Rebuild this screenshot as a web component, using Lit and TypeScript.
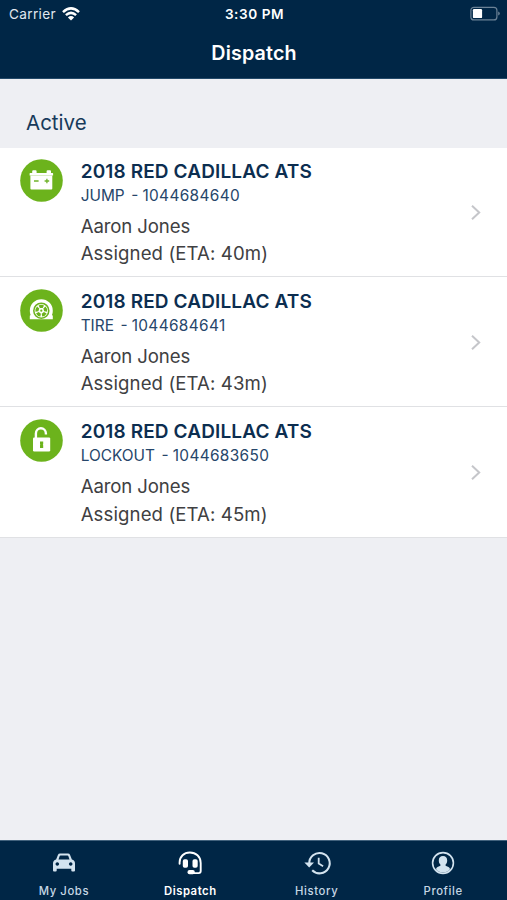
import { LitElement, html, css, svg } from "lit";
import { customElement } from "lit/decorators.js";
import { classMap } from "lit/directives/class-map.js";

const batteryIcon = svg`
  <path fill="#fff" d="M12.2 14.1V12.3q0-1 1-1h2.4q1 0 1 1v1.8h10V12.3q0-1 1-1h2.4q1 0 1 1v1.8h1.6q.5 0 .5.5v2H9.6v-2q0-.5.5-.5z"/>
  <path fill="#fff" d="M10.400 16.500h21.900v13q0 1-1 1H11.400q-1 0-1-1z"/>
  <path stroke="#6fb32a" stroke-width="1.300" d="M14 22h4.600M24.600 22h4.600M26.900 19.700v4.600"/>`;

const tireIcon = svg`
  <path fill="#fff" d="M9.800 30.300v-3.500l.8-.9A11.500 11.500 0 0 1 9.800 21.700a11.500 11.500 0 1 1 23 0q0 2.400-.8 4.200l.8.9v3.500z"/>
  <circle cx="21.300" cy="21.700" r="7.500" fill="#fff" stroke="#6cb31c" stroke-width="1.500"/>
  <g fill="#6cb31c">
    ${[0, 72, 144, 216, 288].map(
      (a) => svg`<path transform="rotate(${a} 21.3 21.7)" d="M18.600 16.400q2.700-1.400 5.400 0l-1.300 2.700h-2.800z"/>`
    )}
    <circle cx="21.300" cy="21.700" r="1.100"/>
  </g>`;

const lockIcon = svg`
  <path fill="none" stroke="#fff" stroke-width="2.400" d="M15.900 20V14.400a5 5.200 0 0 1 10 0v1.200"/>
  <rect x="13" y="18.400" width="17.200" height="14" rx="1.200" fill="#fff"/>
  <path fill="#6cb31c" d="M20 22.400h3.200v2.900l-.4.400.4.500v2.700H20v-2.700l.4-.5-.4-.4z"/>`;

const carIcon = svg`
  <path fill="#d3e3ef" fill-rule="evenodd" d="M6 3.800Q6.500 2.400 8 2.400h8q1.500 0 2 1.400l1.900 4.800q3.100 1 3.100 3.800v7.100q0 1-1 1h-1.700q-1 0-1-1v-1.700H4.700v1.700q0 1-1 1H2q-1 0-1-1v-7.100q0-2.800 3.100-3.800zM8.500 4.600q-.7 0-.9.7L6.500 8.500h11l-1.100-3.200q-.2-.7-.9-.7zM5.300 11.300a1.800 1.700 0 1 0 .01 0zM18.700 11.300a1.800 1.700 0 1 0 .01 0z"/>`;

const headsetIcon = svg`
  <path fill="none" stroke="#fff" stroke-width="1.900" stroke-linecap="round" d="M1.600 12.700V11.500C1.600 5.400 6 1.500 11.900 1.500s10.800 4 10.800 10.400v8.200q0 2-2 2h-5.500"/>
  <rect x="4.800" y="8.300" width="5.200" height="8.400" rx="1.800" fill="#fff"/>
  <rect x="14.500" y="8.300" width="5.200" height="8.400" rx="1.800" fill="#fff"/>
  <rect x="9.500" y="19" width="7.300" height="4.200" rx="2" fill="#fff"/>`;

const historyIcon = svg`
  <path fill="none" stroke="#d3e3ef" stroke-width="2.100" d="M4.300 12.600A10.200 10.200 0 1 1 7.200 19.300"/>
  <path fill="#d3e3ef" d="M-.6 11.600h9.600L4.200 16.600z"/>
  <path fill="none" stroke="#d3e3ef" stroke-width="1.800" d="M13.700 6.700v5.900l4.400 2.600"/>`;

const profileIcon = svg`
  <circle cx="12" cy="12" r="10.400" fill="none" stroke="#d3e3ef" stroke-width="1.600"/>
  <path fill="#d3e3ef" d="M12 5.100c2.700 0 4.200 1.700 4.200 4.300 0 1.900-.6 3.100-1.600 4.100v1.300l2.900 1.200q1.500.7 1.500 2.200A9.200 9.200 0 0 1 5 18.200q0-1.500 1.500-2.200l2.900-1.200v-1.300c-1-1-1.600-2.200-1.600-4.100 0-2.600 1.500-4.300 4.200-4.300z"/>`;

const jobs = [
  { icon: batteryIcon, type: "JUMP", id: "1044684640", eta: "40m" },
  { icon: tireIcon, type: "TIRE", id: "1044684641", eta: "43m" },
  { icon: lockIcon, type: "LOCKOUT", id: "1044683650", eta: "45m" },
];

const tabs = [
  { icon: carIcon, label: "My Jobs" },
  { icon: headsetIcon, label: "Dispatch", active: true },
  { icon: historyIcon, label: "History" },
  { icon: profileIcon, label: "Profile" },
];

@customElement("app-root")
export class AppRoot extends LitElement {
  static styles = css`
    :host {
      display: flex;
      flex-direction: column;
      height: 900px;
      background: #eeeff3;
      font-family: Inter, "Liberation Sans", sans-serif;
      color: #404042;
      overflow: hidden;
    }
    svg { display: block; overflow: visible; }
    .top {
      background: #002646;
      color: #fff;
      height: 79px;
      box-sizing: border-box;
      border-bottom: 1px solid #234969;
    }
    .status {
      display: grid;
      grid-template-columns: 1fr auto 1fr;
      align-items: center;
      height: 27px;
      padding: 0 7px 0 9px;
      font-size: 13.6px;
    }
    .carrier { display: flex; align-items: center; gap: 6px; color: #e0e8ef; letter-spacing: 0.35px; }
    .time { font-weight: 600; font-size: 13.6px; letter-spacing: 0.55px; }
    .battery { justify-self: end; }
    .title {
      margin: 0;
      text-align: center;
      font-size: 19.7px;
      font-weight: 600;
      line-height: 52px;
      letter-spacing: 0.15px;
      text-indent: 1px;
    }
    .section {
      margin: 0;
      height: 69px;
      box-sizing: border-box;
      padding: 29.5px 26px 0;
      font-size: 20.5px;
      line-height: 28px;
      font-weight: 400;
      color: #173a5a;
    }
    .job {
      display: flex;
      box-sizing: border-box;
      height: 130.25px;
      padding: 12px 26px 0 20px;
      background: #fff;
      border-bottom: 1px solid #e0e1e4;
    }
    .job:first-of-type { height: 129px; padding-top: 11px; }
    .badge { width: 43px; height: 43px; margin: 0 17.7px 0 0; flex: none; }
    .info { flex: 1; white-space: pre; }
    .vehicle { font-size: 19px; font-weight: 600; line-height: 25px; letter-spacing: 0.13px; color: #0c2e50; }
    .ref { font-size: 15.4px; line-height: 23px; word-spacing: -1.1px; color: #26466a; margin-bottom: 6px; }
    .id { letter-spacing: 0.35px; margin-left: 1px; }
    .line { font-size: 18.6px; line-height: 27.3px; letter-spacing: 0.1px; }
    .name { letter-spacing: -0.12px; }
    .chevron { margin-top: 45.5px; }
    .tabs {
      margin-top: auto;
      height: 60px;
      box-sizing: border-box;
      display: grid;
      grid-template-columns: repeat(4, 126.4px);
      justify-content: center;
      background: #002646;
      border-top: 1px solid #42627d;
      color: #c5d6e4;
    }
    .tab { display: flex; flex-direction: column; align-items: center; padding-top: 10px; }
    .tab svg { margin-bottom: 9px; }
    .label { font-size: 11.3px; line-height: 15px; letter-spacing: 0.6px; font-weight: 500; }
    .active .label { color: #fff; font-weight: 600; letter-spacing: 0.55px; }
  `;

  render() {
    return html`
      <header class="top">
        <div class="status">
          <span class="carrier">Carrier
            <svg width="18" height="14" viewBox="0 0 18 14" fill="none" stroke="#fff" stroke-width="2.500">
              <path d="M1 5.100Q9-2.300 17 5.100"/>
              <path d="M3.900 8.100Q9 3.600 14.100 8.100"/>
              <path fill="#fff" stroke="none" d="M5.900 10.400Q9 7.700 12.100 10.400L9 13.600z"/>
            </svg>
          </span>
          <span class="time">3:30 PM</span>
          <svg class="battery" width="30" height="14" viewBox="0 0 30 14">
            <rect x=".9" y=".3" width="26" height="12.600" rx="3" fill="none" stroke="#6b8296" stroke-width="1.200"/>
            <rect x="2.900" y="2.100" width="9.200" height="9" rx="1.200" fill="#fff"/>
            <path d="M28.200 4.500v4q1.600-.5 1.600-2t-1.600-2z" fill="#6b8296"/>
          </svg>
        </div>
        <h1 class="title">Dispatch</h1>
      </header>
      <h2 class="section">Active</h2>
      <main>
        ${jobs.map(
          (j) => html`<article class="job">
            <svg class="badge" viewBox="0 0 43 43"><circle cx="21.500" cy="21.500" r="21.300" fill="#6cb31c"/>${j.icon}</svg>
            <div class="info"><div class="vehicle">2018 RED CADILLAC ATS</div><div class="ref">${j.type}  - <span class="id">${j.id}</span></div><div class="line name">Aaron Jones</div><div class="line">Assigned (ETA: ${j.eta})</div></div>
            <svg class="chevron" width="10" height="15" viewBox="0 0 10 15" fill="none" stroke="#c5c6ca" stroke-width="2"><path d="M1 .8l7.200 6.700L1 14.200"/></svg>
          </article>`
        )}
      </main>
      <nav class="tabs">
        ${tabs.map(
          (t) => html`<div class=${classMap({ tab: true, active: !!t.active })}>
            <svg width="24" height="24" viewBox="0 0 24 24">${t.icon}</svg>
            <span class="label">${t.label}</span>
          </div>`
        )}
      </nav>
    `;
  }
}
